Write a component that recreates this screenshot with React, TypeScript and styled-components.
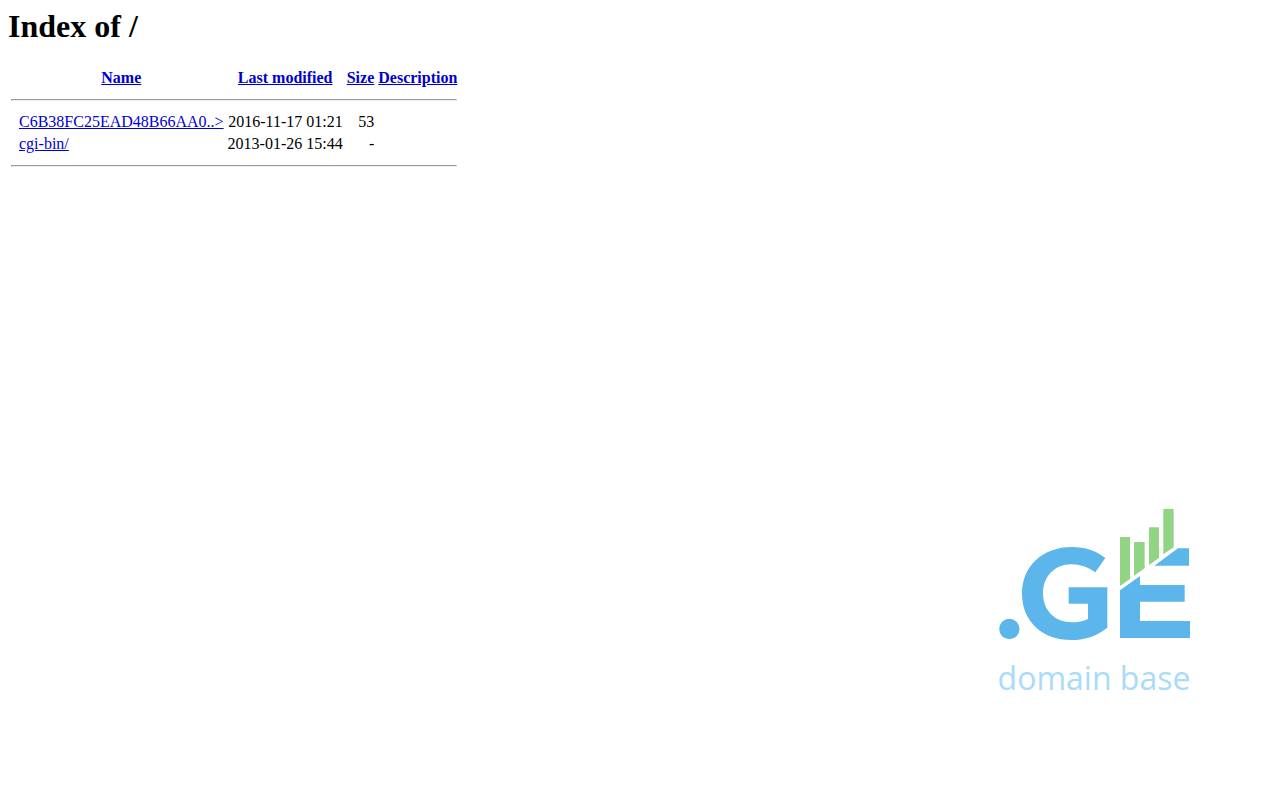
import React from "react";
import styled, { createGlobalStyle } from "styled-components";

const GlobalStyle = createGlobalStyle`
  *, *::before, *::after { box-sizing: border-box; }
  body {
    margin: 0;
    background: #ffffff;
    color: #000000;
    font: 16px "Liberation Serif", "Times New Roman", serif;
  }
`;

const Page = styled.div`
  display: flex;
  flex-direction: column;
  justify-content: space-between;
  min-height: 100vh;
  padding: 8px 80px 94px 8px;
`;

const Title = styled.h1`
  margin: 0 0 21px;
  font-size: 32px;
  line-height: 37px;
`;

const Listing = styled.table`
  border-collapse: separate;
  border-spacing: 2px;
  line-height: 18px;
`;

const HeadCell = styled.th`
  padding: 1px;
  white-space: nowrap;
`;

const Cell = styled.td<{ $align?: "left" | "right" }>`
  padding: 1px;
  text-align: ${({ $align = "left" }) => $align};
  white-space: nowrap;
`;

const Rule = styled.hr`
  margin: 8px 0;
  border: 1px solid;
  border-color: #9a9a9a #eeeeee #eeeeee #9a9a9a;
`;

const Link = styled.a`
  color: #0000d4;
  text-decoration: underline;
`;

const Brand = styled.figure`
  display: flex;
  flex-direction: column;
  align-self: flex-end;
  width: 210px;
  margin: 0;
`;

const Mark = styled.svg`
  display: block;
  width: 100%;
  height: auto;
`;

const Tagline = styled.figcaption`
  padding-right: 2px;
  color: #a9dbfb;
  font: 32px/56px "Open Sans", "Noto Sans", sans-serif;
  text-align: center;
  white-space: nowrap;
`;

const columns = ["Name", "Last modified", "Size", "Description"];

const entries = [
  { name: "C6B38FC25EAD48B66AA0..>", modified: "2016-11-17 01:21", size: "53" },
  { name: "cgi-bin/", modified: "2013-01-26 15:44", size: "-" },
];

function RuleRow() {
  return (
    <tr>
      <Cell colSpan={5}>
        <Rule />
      </Cell>
    </tr>
  );
}

function Logo() {
  return (
    <Brand>
      <Mark viewBox="0 0 630 450" role="img" aria-label=".GE">
        <g fill="#5cb6ec">
          <circle cx="58" cy="387" r="30.5" />
          <path d="M346 174 L316 217 C294 201 270 193 244 193 C194 193 159 230 159 280 C159 332 195 367 246 367 C264 367 280 364 294 357 L294 311 L236 311 L236 262 L352 262 L352 383 C322 407 286 420 245 420 C157 420 96 364 96 281 C96 198 158 141 246 141 C286 141 318 152 346 174 Z" />
          <path d="M390 271 L450 228 L450 255 L584 255 L584 305 L450 305 L450 363 L600 363 L600 414 L390 414 Z" />
          <path d="M564 145 L597 145 L597 197 L493 197 Z" />
        </g>
        <g fill="#91d483">
          <path d="M390 111 H420 V237 L390 258 Z" />
          <path d="M432 126 H464 V205 L432 227 Z" />
          <path d="M477 82 H507 V174 L477 195 Z" />
          <path d="M520 27 H551 V142 L520 163 Z" />
        </g>
      </Mark>
      <Tagline>domain base</Tagline>
    </Brand>
  );
}

export default function App() {
  return (
    <>
      <GlobalStyle />
      <Page>
        <main>
          <Title>Index of /</Title>
          <Listing>
            <thead>
              <tr>
                <Cell>&nbsp;</Cell>
                {columns.map((column) => (
                  <HeadCell key={column} scope="col">
                    <Link href="#">{column}</Link>
                  </HeadCell>
                ))}
              </tr>
            </thead>
            <tbody>
              <RuleRow />
              {entries.map((entry) => (
                <tr key={entry.name}>
                  <Cell />
                  <Cell>
                    <Link href="#">{entry.name}</Link>
                  </Cell>
                  <Cell $align="right">{entry.modified}</Cell>
                  <Cell $align="right">{entry.size}</Cell>
                  <Cell />
                </tr>
              ))}
              <RuleRow />
            </tbody>
          </Listing>
        </main>
        <Logo />
      </Page>
    </>
  );
}
